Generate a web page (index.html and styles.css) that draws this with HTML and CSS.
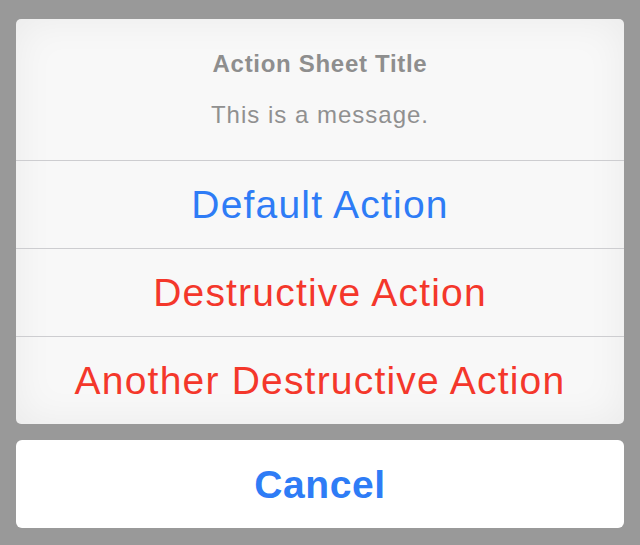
FILE: index.html
```html
<!DOCTYPE html>
<html>
<head>
<meta charset="utf-8">
<link rel="stylesheet" href="styles.css">
</head>
<body>
<div class="screen">
  <div class="sheet">
    <div class="header">
      <div class="title">Action Sheet Title</div>
      <div class="message">This is a message.</div>
    </div>
    <div class="action default">Default Action</div>
    <div class="action destructive">Destructive Action</div>
    <div class="action destructive">Another Destructive Action</div>
  </div>
  <div class="cancel">Cancel</div>
</div>
</body>
</html>
```
FILE: styles.css
```css
html, body {
  margin: 0;
  padding: 0;
  background: #999999;
}
.screen {
  width: 640px;
  height: 545px;
  box-sizing: border-box;
  padding: 19px 16px 0;
  display: flex;
  flex-direction: column;
  gap: 16px;
  font-family: "Liberation Sans", Arial, sans-serif;
}
.sheet {
  background: #f8f8f8;
  border-radius: 5px;
  overflow: hidden;
  box-shadow: inset 0 0 40px rgba(0, 0, 0, 0.06);
}
.header {
  padding: 33px 0;
  display: flex;
  flex-direction: column;
  gap: 27px;
  text-align: center;
  color: #8e8e8e;
}
.title {
  font-size: 24px;
  line-height: 24px;
  font-weight: bold;
  letter-spacing: 0.7px;
}
.message {
  font-size: 24px;
  line-height: 24px;
  letter-spacing: 1px;
  color: #909090;
}
.action {
  height: 87px;
  border-top: 1px solid #cdcdd0;
  display: flex;
  align-items: center;
  justify-content: center;
  font-size: 39px;
  line-height: 39px;
  letter-spacing: 1.2px;
}
.default {
  color: #2e7cf6;
}
.destructive {
  color: #f4372b;
}
.cancel {
  height: 88px;
  background: #ffffff;
  border-radius: 6px;
  display: flex;
  align-items: center;
  justify-content: center;
  font-size: 39px;
  line-height: 39px;
  font-weight: bold;
  letter-spacing: 0.6px;
  color: #2e7cf6;
}
```
